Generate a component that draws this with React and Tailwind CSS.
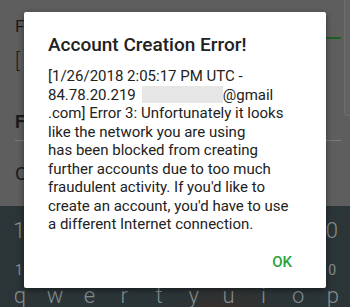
export default function App() {
  const keys = ["q", "w", "e", "r", "t", "y", "u", "i", "o", "p"];
  return (
    <div
      className="relative w-[350px] h-[307px] overflow-hidden"
      style={{ fontFamily: "Roboto, 'Noto Sans', sans-serif" }}
    >
      {/* background page (dimmed) */}
      <div className="flex flex-col h-full">
        <div className="h-[213px] bg-[#5e5e5e] flex justify-between">
          <div className="flex flex-col pl-[15px] pt-[16px] text-[#1c1c1c]">
            <div className="text-[17px] leading-[20px]">F</div>
            <div className="mt-[14px] text-[20px] leading-[22px] font-light">[</div>
            <div className="mt-[40px] text-[18px] leading-[20px] font-bold">F</div>
            <div className="mt-[8px] h-px w-[20px] bg-[#7a7a7a]" />
            <div className="mt-[22px] text-[19px] leading-[22px]">C</div>
          </div>
          <div className="flex">
            <div className="flex flex-col pt-[37px]">
              <div className="h-[2px] w-[16px] bg-[#1f5e1f]" />
              <div className="mt-[101px] h-px w-[16px] bg-[#7a7a7a]" />
            </div>
            <div className="ml-[3px] w-[6px] h-[116px] bg-[#626262] rounded-bl-[4px] border-l border-b border-[#6e6e6e]" />
          </div>
        </div>
        <div className="flex-1 bg-[#2b3437] bg-[radial-gradient(ellipse_60px_40px_at_225px_115%,#3b2e28,transparent)] flex flex-col text-[#858d90]">
          <div className="flex justify-between pl-[13px] pr-[12px] pt-[14px]">
            <span className="text-[22px] leading-[22px] font-light">1</span>
            <span className="text-[22px] leading-[22px] font-light">0</span>
          </div>
          <div className="flex justify-between pl-[15px] pr-[14px] pt-[21px]">
            <span className="text-[14px] leading-[14px]">1</span>
            <span className="text-[14px] leading-[14px]">0</span>
          </div>
          <div className="flex justify-between pl-[12px] pr-[9px] pt-[8px]">
            {keys.map((k) => (
              <span key={k} className="text-[22px] leading-[22px] font-light w-[16px] text-center">
                {k}
              </span>
            ))}
          </div>
        </div>
      </div>

      {/* dialog */}
      <div className="absolute left-[24px] top-[12px] w-[302px] h-[276px] bg-white rounded-[2px] shadow-[0_2px_6px_rgba(0,0,0,0.45)] flex flex-col">
        <div className="pl-[24px] pt-[21px] text-[19px] leading-[24px] font-medium text-[#212121]">
          Account Creation Error!
        </div>
        <div className="pl-[24px] pt-[10px] text-[15px] leading-[18.5px] text-[#222] whitespace-nowrap">
          <div>[1/26/2018 2:05:17 PM UTC -</div>
          <div className="flex items-center">
            <span>84.78.20.219</span>
            <span className="ml-[6px] inline-block w-[81px] h-[17px] bg-[#e6e6e6]" />
            <span>@gmail</span>
          </div>
          <div>.com] Error 3: Unfortunately it looks</div>
          <div>like the network you are using</div>
          <div>has been blocked from creating</div>
          <div>further accounts due to too much</div>
          <div>fraudulent activity. If you'd like to</div>
          <div>create an account, you'd have to use</div>
          <div>a different Internet connection.</div>
        </div>
        <div className="flex justify-end pr-[34px] pt-[19px]">
          <span className="text-[15px] leading-[18px] font-medium text-[#2aa33a]">OK</span>
        </div>
      </div>
    </div>
  );
}
